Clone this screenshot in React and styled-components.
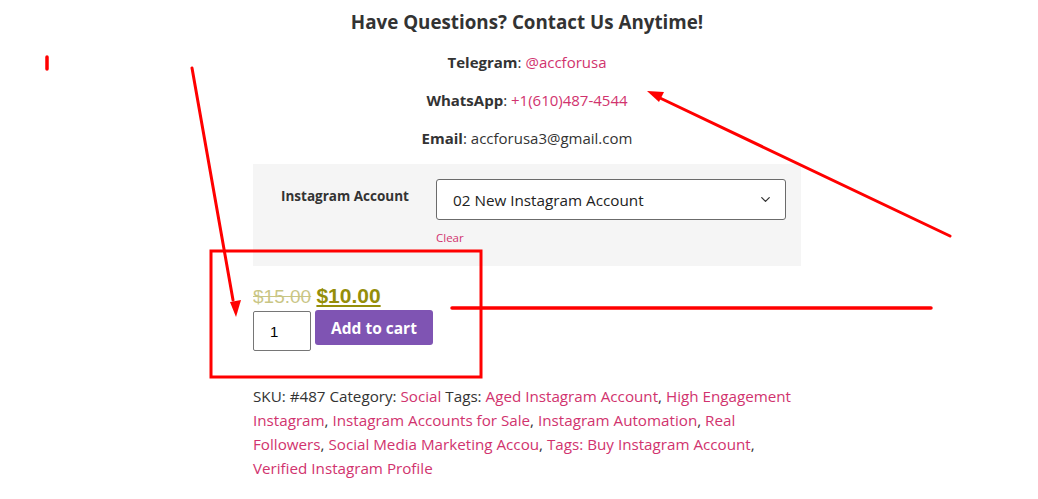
import React from 'react'
import styled, { createGlobalStyle } from 'styled-components'
import { ChevronDown } from 'lucide-react'

const GlobalStyle = createGlobalStyle`
  body {
    margin: 0;
    background: #fff;
    font-family: "Open Sans", "Noto Sans", sans-serif;
    color: #333;
  }
`

const tags = [
  'Aged Instagram Account',
  'High Engagement Instagram',
  'Instagram Accounts for Sale',
  'Instagram Automation',
  'Real Followers',
  'Social Media Marketing Accou',
]

const ProductPage = () => {
  return (
    <Page>
      <GlobalStyle />
      <Column>
        <Heading>Have Questions? Contact Us Anytime!</Heading>
        <ContactLine><b>Telegram</b>: <Link>@accforusa</Link></ContactLine>
        <ContactLine><b>WhatsApp</b>: <Link>+1(610)487-4544</Link></ContactLine>
        <ContactLine><b>Email</b>: accforusa3@gmail.com</ContactLine>

        <Variations>
          <Label>Instagram Account</Label>
          <Field>
            <Select>
              <span>02 New Instagram Account</span>
              <ChevronDown size={15} strokeWidth={2} />
            </Select>
            <Clear>Clear</Clear>
          </Field>
        </Variations>

        <Price>
          <Old>$15.00</Old> <New>$10.00</New>
        </Price>
        <CartRow>
          <Qty>1</Qty>
          <CartButton>Add to cart</CartButton>
        </CartRow>

        <Meta>
          SKU: #487 Category: <Link>Social</Link> Tags:{' '}
          {tags.map((t) => (
            <React.Fragment key={t}>
              <Link>{t}</Link>,{' '}
            </React.Fragment>
          ))}
          <Link>Tags: Buy Instagram Account</Link>, <Link>Verified Instagram Profile</Link>
        </Meta>
      </Column>

      <Marks width="1038" height="499" viewBox="0 0 1038 499">
        <g stroke="#ff0000" strokeWidth="3" fill="none" strokeLinecap="round">
          <line x1="47" y1="57" x2="47" y2="69" strokeWidth="3.5" />
          <line x1="192" y1="68" x2="233" y2="300" />
          <rect x="211" y="251" width="270" height="126" strokeLinecap="butt" />
          <line x1="950" y1="236" x2="660" y2="98" />
          <line x1="452" y1="308" x2="931" y2="308" strokeWidth="3.5" />
        </g>
        <g fill="#ff0000">
          <polygon points="236,317 230,302 241,300" />
          <polygon points="647,91 664,92 659,102" />
        </g>
      </Marks>
    </Page>
  )
}

// ///// Style ////////
const Page = styled.div`
  position: relative;
  width: 1038px;
  height: 499px;
  overflow: hidden;
`
const Column = styled.div`
  width: 548px;
  margin-left: 253px;
  padding-top: 8px;
`
const Heading = styled.h2`
  margin: 0 0 14px;
  text-align: center;
  font-size: 18.8px;
  line-height: 28px;
  font-weight: 700;
  color: #333;
`
const ContactLine = styled.p`
  margin: 0 0 14px;
  text-align: center;
  font-size: 15px;
  line-height: 24px;
  color: #333;
  b { font-weight: 700; }
`
const Link = styled.a`
  color: #d1336e;
  cursor: pointer;
`

// Variations box =================
const Variations = styled.div`
  background: #f5f5f5;
  height: 102px;
  box-sizing: border-box;
  padding: 15px 15px 0 28px;
  display: flex;
`
const Label = styled.div`
  width: 155px;
  flex-shrink: 0;
  padding-top: 8px;
  font-size: 13.5px;
  font-weight: 700;
  color: #333;
`
const Field = styled.div`
  flex: 1;
`
const Select = styled.div`
  height: 41px;
  box-sizing: border-box;
  border: 1px solid #6b6b6b;
  border-radius: 3px;
  background: #fff;
  display: flex;
  align-items: center;
  justify-content: space-between;
  padding: 0 12px 0 16px;
  font-size: 15.25px;
  color: #222;
  svg { color: #333; }
`
const Clear = styled.div`
  margin-top: 10px;
  font-size: 11.5px;
  color: #d1336e;
`

// Cart =================
const Price = styled.div`
  margin-top: 16px;
  height: 28px;
  line-height: 28px;
  font-family: "Liberation Sans", Arial, sans-serif;
  font-size: 19px;
  color: #958e09;
`
const Old = styled.del`
  opacity: 0.5;
`
const New = styled.ins`
  font-weight: 700;
  font-size: 21px;
`
const CartRow = styled.div`
  margin-top: 1px;
  display: flex;
  align-items: flex-start;
  gap: 4px;
`
const Qty = styled.div`
  width: 58px;
  height: 40px;
  box-sizing: border-box;
  border: 1px solid #767676;
  border-radius: 2px;
  padding-left: 16px;
  display: flex;
  align-items: center;
  font-family: "Liberation Sans", Arial, sans-serif;
  font-size: 15px;
  color: #000;
`
const CartButton = styled.button`
  margin-top: -1px;
  height: 35px;
  width: 118px;
  border: none;
  border-radius: 3px;
  background: #7f54b3;
  color: #fff;
  font-family: "Open Sans", sans-serif;
  font-size: 15.5px;
  font-weight: 700;
  cursor: pointer;
`
const Meta = styled.div`
  width: 552px;
  margin-top: 33px;
  font-size: 15.2px;
  line-height: 24px;
  color: #333;
`

const Marks = styled.svg`
  position: absolute;
  left: 0;
  top: 0;
  pointer-events: none;
`

export default ProductPage
